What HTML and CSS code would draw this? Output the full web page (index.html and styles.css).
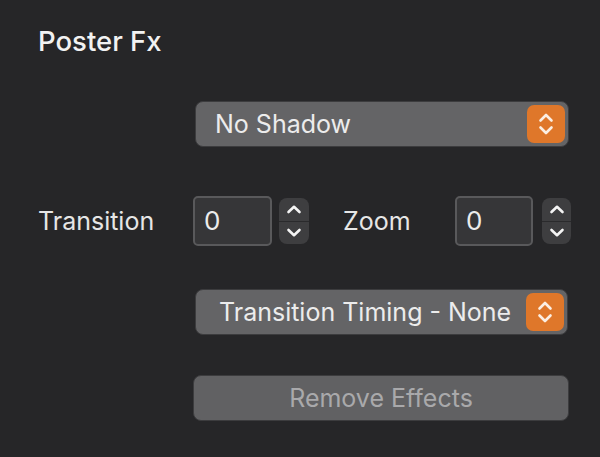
FILE: index.html
```html
<!DOCTYPE html>
<html>
<head>
<meta charset="utf-8">
<link rel="stylesheet" href="styles.css">
</head>
<body>
<div class="panel">
  <div class="title">Poster Fx</div>

  <div class="popup popup-shadow">
    <span class="popup-text">No Shadow</span>
    <span class="popup-arrows">
      <svg width="16" height="26" viewBox="0 0 16 26"><path d="M2.5 9.5 L8 4 L13.5 9.5 M2.5 16.5 L8 22 L13.5 16.5" fill="none" stroke="#fbeee2" stroke-width="2.6" stroke-linecap="round" stroke-linejoin="round"/></svg>
    </span>
  </div>

  <div class="fields">
    <span class="label label-transition">Transition</span>
    <div class="input input-a">0</div>
    <div class="stepper stepper-a">
      <span class="step"><svg width="16" height="9" viewBox="0 0 16 9"><path d="M2.5 7 L8 1.8 L13.5 7" fill="none" stroke="#f4f4f4" stroke-width="2.6" stroke-linecap="round" stroke-linejoin="round"/></svg></span>
      <span class="step step-down"><svg width="16" height="9" viewBox="0 0 16 9"><path d="M2.5 2 L8 7.2 L13.5 2" fill="none" stroke="#f4f4f4" stroke-width="2.6" stroke-linecap="round" stroke-linejoin="round"/></svg></span>
    </div>
    <span class="label label-zoom">Zoom</span>
    <div class="input input-b">0</div>
    <div class="stepper stepper-b">
      <span class="step"><svg width="16" height="9" viewBox="0 0 16 9"><path d="M2.5 7 L8 1.8 L13.5 7" fill="none" stroke="#f4f4f4" stroke-width="2.6" stroke-linecap="round" stroke-linejoin="round"/></svg></span>
      <span class="step step-down"><svg width="16" height="9" viewBox="0 0 16 9"><path d="M2.5 2 L8 7.2 L13.5 2" fill="none" stroke="#f4f4f4" stroke-width="2.6" stroke-linecap="round" stroke-linejoin="round"/></svg></span>
    </div>
  </div>

  <div class="popup popup-timing">
    <span class="popup-text">Transition Timing - None</span>
    <span class="popup-arrows">
      <svg width="16" height="26" viewBox="0 0 16 26"><path d="M2.5 9.5 L8 4 L13.5 9.5 M2.5 16.5 L8 22 L13.5 16.5" fill="none" stroke="#fbeee2" stroke-width="2.6" stroke-linecap="round" stroke-linejoin="round"/></svg>
    </span>
  </div>

  <div class="button">Remove Effects</div>
</div>
</body>
</html>
```

FILE: styles.css
```css
html, body {
  margin: 0;
  padding: 0;
  background: #262628;
}
body {
  width: 600px;
  height: 457px;
  overflow: hidden;
  font-family: "Inter", "Liberation Sans", sans-serif;
  color: #e6e6e6;
}
.panel {
  display: flex;
  flex-direction: column;
  padding: 25px 0 0 38px;
}
.title {
  font-size: 27.5px;
  font-weight: 500;
  line-height: 32px;
  color: #f2f2f2;
}
.popup {
  display: flex;
  align-items: center;
  box-sizing: border-box;
  background: #646466;
  border: 1px solid #3c3c3e;
  border-radius: 8px;
  height: 46px;
  font-size: 25px;
  color: #ececec;
}
.popup-shadow {
  margin: 44px 0 0 157px;
  width: 374px;
  padding: 0 3px 0 19px;
}
.popup-timing {
  margin: 43px 0 0 157px;
  width: 373px;
  padding: 0 3px 0 23px;
}
.popup-text {
  flex: 1;
  white-space: nowrap;
}
.popup-arrows {
  display: flex;
  align-items: center;
  justify-content: center;
  width: 38px;
  height: 38px;
  border-radius: 7px;
  background: #df772a;
}
.fields {
  display: flex;
  align-items: center;
  margin-top: 49px;
  height: 50px;
}
.label {
  font-size: 25px;
  color: #e6e6e6;
}
.label-transition {
  width: 155px;
}
.label-zoom {
  width: 112px;
  margin-left: 34px;
}
.input {
  box-sizing: border-box;
  height: 50px;
  border: 2px solid #59595b;
  border-radius: 5px;
  background: #363638;
  font-size: 26px;
  line-height: 46px;
  padding-left: 9px;
  color: #ececec;
}
.input-a { width: 79px; }
.input-b { width: 78px; }
.stepper {
  display: flex;
  flex-direction: column;
  height: 46px;
  border-radius: 8px;
  background: #3e3e40;
  overflow: hidden;
}
.stepper-a { width: 30px; margin-left: 7px; }
.stepper-b { width: 29px; margin-left: 9px; }
.step {
  flex: 1;
  display: flex;
  align-items: center;
  justify-content: center;
}
.step-down {
  border-top: 1px solid #2a2a2c;
}
.button {
  margin: 40px 0 0 155px;
  width: 376px;
  height: 46px;
  box-sizing: border-box;
  border-radius: 8px;
  background: #616163;
  border: 1px solid #3c3c3e;
  display: flex;
  align-items: center;
  justify-content: center;
  font-size: 25px;
  color: #a9a9ab;
}
```
